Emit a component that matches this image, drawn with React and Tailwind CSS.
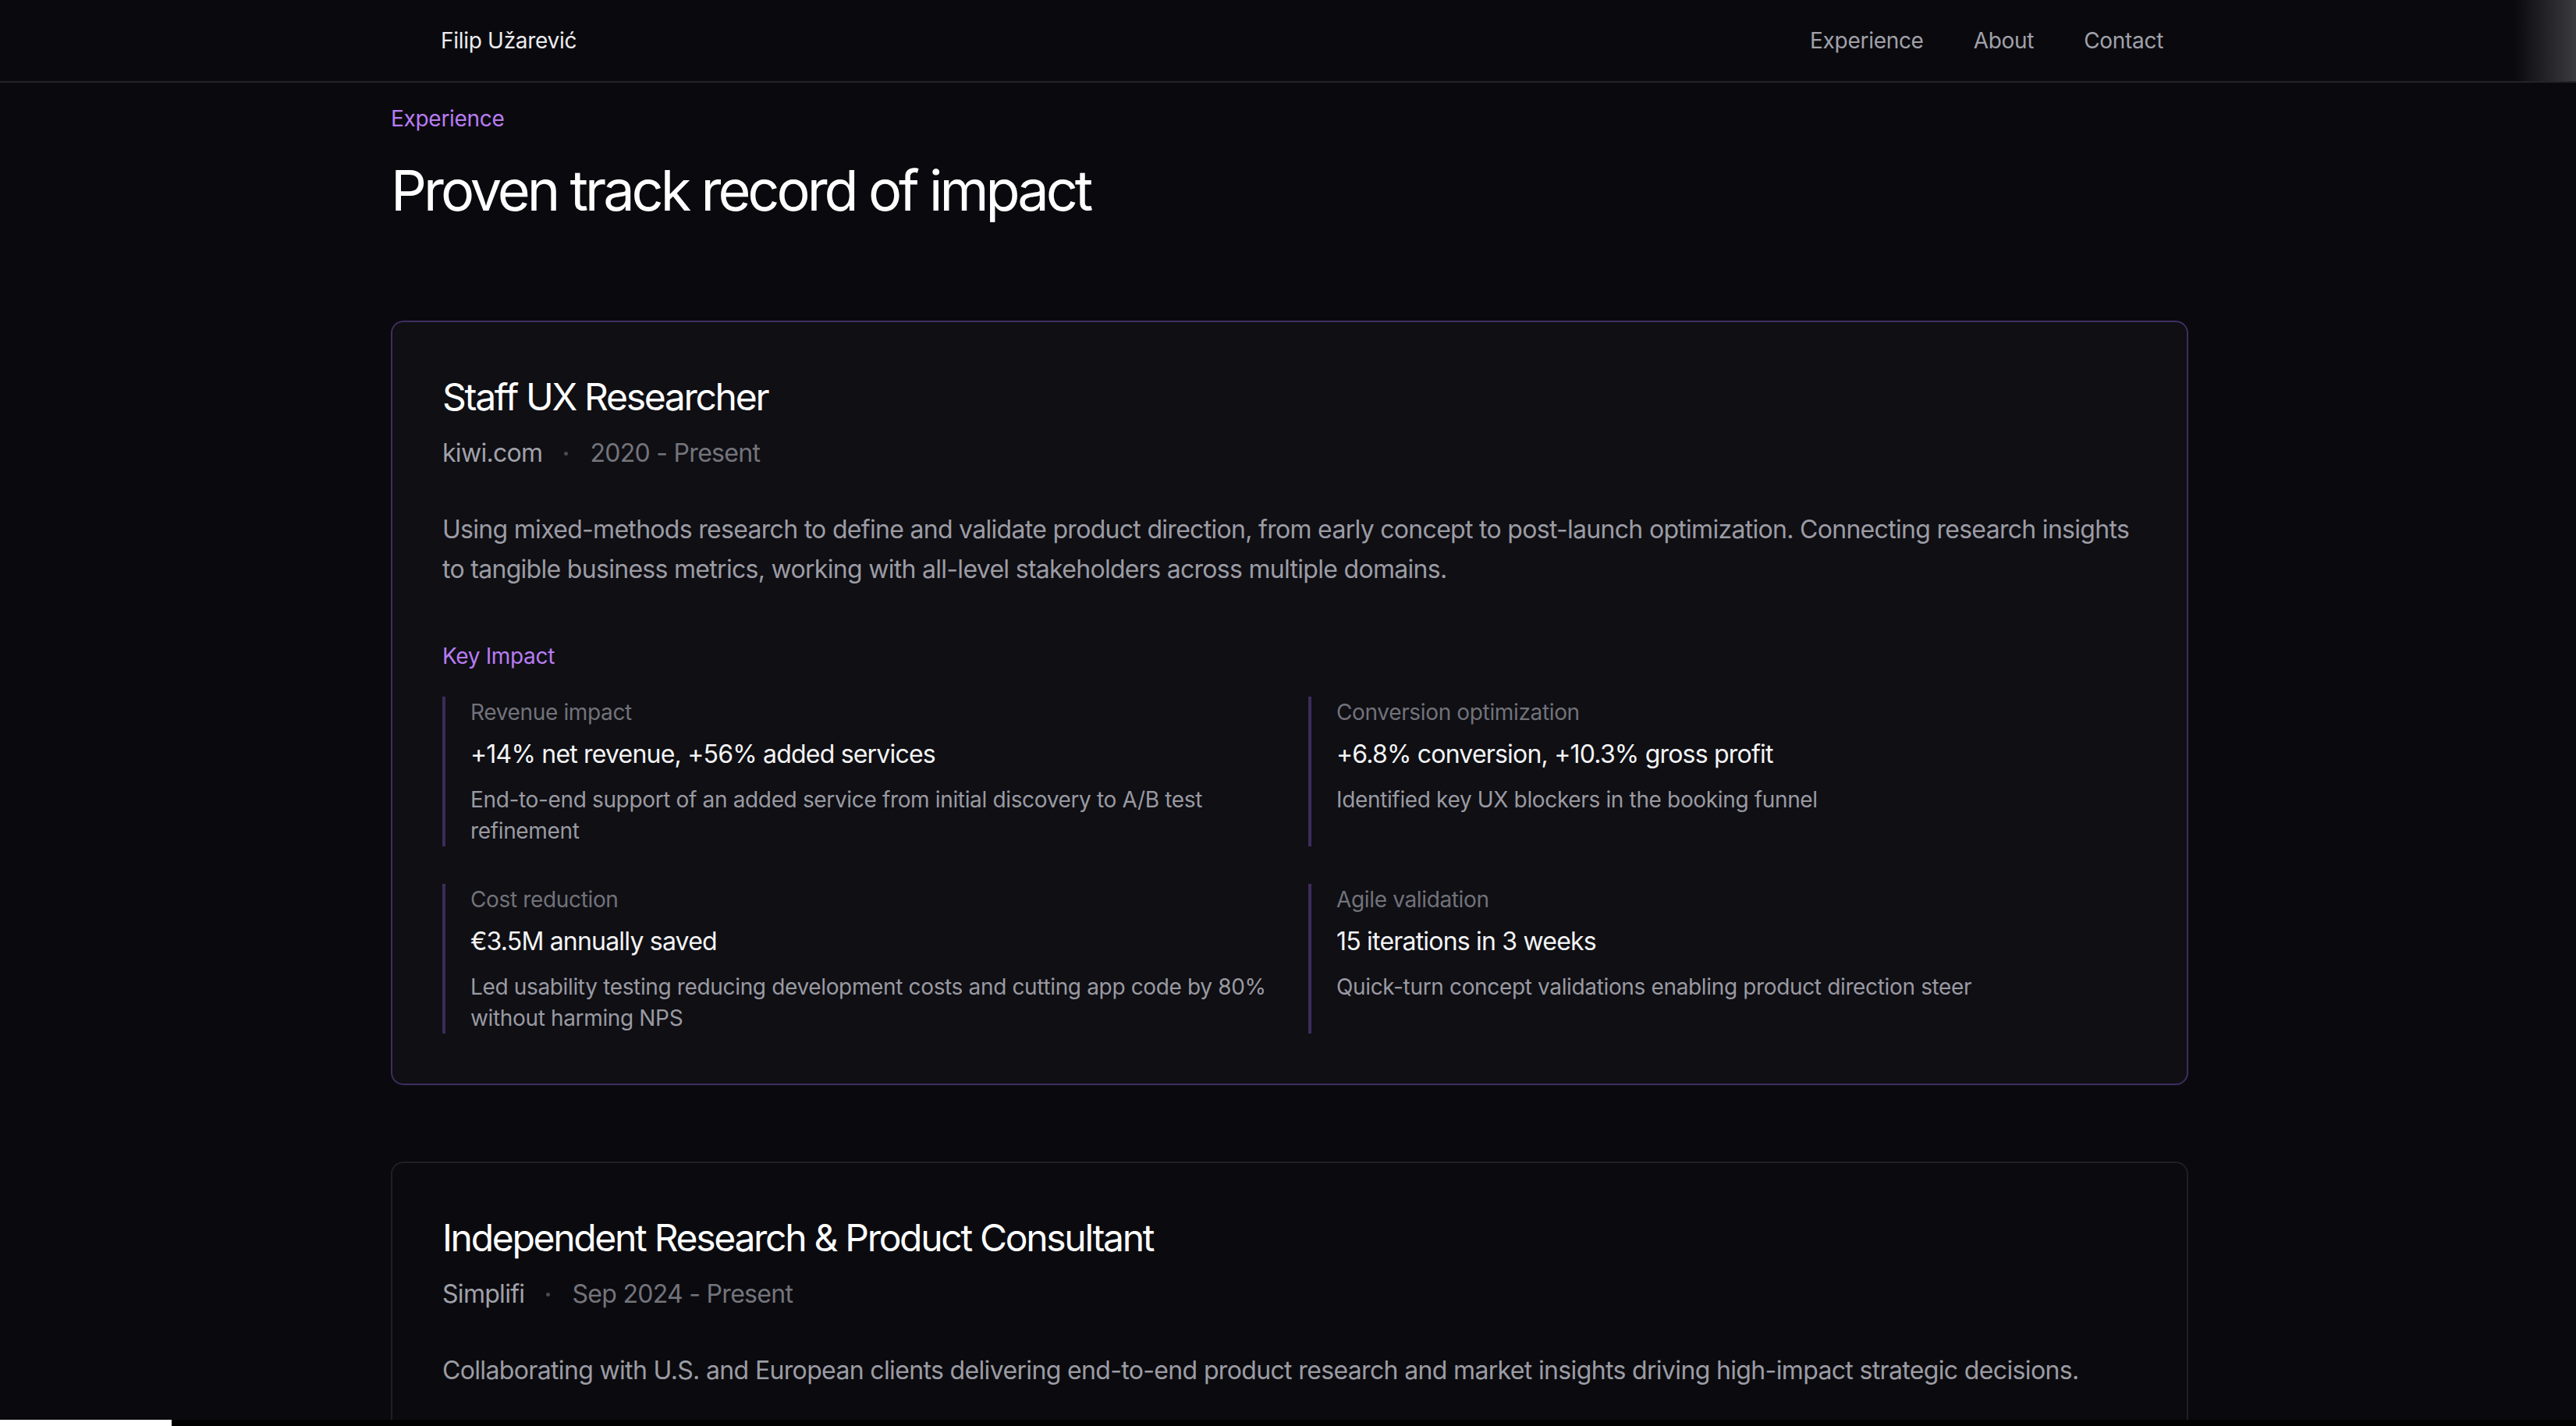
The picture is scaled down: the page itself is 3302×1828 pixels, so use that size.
const impacts = [
  {
    label: 'Revenue impact',
    value: '+14% net revenue, +56% added services',
    desc: 'End-to-end support of an added service from initial discovery to A/B test refinement',
  },
  {
    label: 'Conversion optimization',
    value: '+6.8% conversion, +10.3% gross profit',
    desc: 'Identified key UX blockers in the booking funnel',
  },
  {
    label: 'Cost reduction',
    value: '€3.5M annually saved',
    desc: 'Led usability testing reducing development costs and cutting app code by 80% without harming NPS',
  },
  {
    label: 'Agile validation',
    value: '15 iterations in 3 weeks',
    desc: 'Quick-turn concept validations enabling product direction steer',
  },
];

const Meta = ({ company, period }) => (
  <div className="mt-[16px] flex items-center gap-[28px] text-[32px] leading-[48px] tracking-[-0.7px]">
    <span className="text-[#a1a1aa]">{company}</span>
    <span className="w-[5px] h-[5px] rounded-full bg-[#4b4b53]"></span>
    <span className="text-[#74747c]">{period}</span>
  </div>
);

const App = () => {
  return (
    <div className="relative h-[1828px] overflow-hidden bg-[#0a0a0e] font-['Inter',sans-serif] antialiased">
      <header className="relative h-[106px] border-b-2 border-[#232328] pl-[4px]">
        <div className="max-w-[2304px] h-[104px] mx-auto pl-[64px] pr-[32px] flex items-center justify-between text-[28px] leading-[40px] tracking-[-0.3px]">
          <span className="text-[#ececef]">Filip Užarević</span>
          <nav className="flex items-center gap-[64px] text-[#a1a1aa]">
            <a>Experience</a>
            <a>About</a>
            <a>Contact</a>
          </nav>
        </div>
        <div className="absolute right-0 top-0 h-full w-[80px] bg-gradient-to-r from-transparent to-[#3a3a3f]"></div>
      </header>

      <div className="pl-[4px]">
        <main className="max-w-[2304px] mx-auto pt-[26px]">
          <p className="text-[28px] leading-[40px] tracking-[-0.3px] text-[#b87cf2]">Experience</p>
          <h2 className="mt-[32px] text-[72px] leading-[80px] text-white font-normal tracking-[-4px]">Proven track record of impact</h2>

          <div className="mt-[127px] bg-[#0f0f14] border-2 border-[#3f2d60] rounded-[16px] p-[64px]">
            <h3 className="text-[48px] leading-[64px] tracking-[-2.3px] text-white">Staff UX Researcher</h3>
            <Meta company="kiwi.com" period="2020 - Present" />
            <p className="mt-[48px] text-[32px] leading-[51px] tracking-[-0.7px] text-[#9c9ca4]">
              Using mixed-methods research to define and validate product direction, from early concept to post-launch optimization. Connecting research insights to tangible business metrics, working with all-level stakeholders across multiple domains.
            </p>

            <p className="mt-[66px] text-[28px] leading-[40px] tracking-[-0.35px] text-[#b87cf2]">Key Impact</p>
            <div className="mt-[32px] grid grid-cols-2 gap-[48px]">
              {impacts.map((item) => (
                <div key={item.label} className="border-l-4 border-[#3d2b5c] pl-[32px]">
                  <p className="text-[28px] leading-[40px] tracking-[-0.35px] text-[#72727a]">{item.label}</p>
                  <p className="mt-[10px] text-[32px] leading-[48px] tracking-[-0.8px] text-[#f4f4f5]">{item.value}</p>
                  <p className="mt-[14px] text-[28px] leading-[40px] tracking-[-0.35px] text-[#9a9aa2]">{item.desc}</p>
                </div>
              ))}
            </div>
          </div>

          <div className="mt-[98px] bg-[#0b0b0f] border-2 border-[#1f1f24] rounded-[16px] p-[64px]">
            <h3 className="text-[48px] leading-[64px] tracking-[-2.3px] text-white">Independent Research &amp; Product Consultant</h3>
            <Meta company="Simplifi" period="Sep 2024 - Present" />
            <p className="mt-[48px] text-[32px] leading-[51px] tracking-[-0.65px] text-[#9c9ca4]">
              Collaborating with U.S. and European clients delivering end-to-end product research and market insights driving high-impact strategic decisions.
            </p>
          </div>
        </main>
      </div>

      <div className="absolute left-0 right-0 bottom-0 h-[8px] bg-black">
        <div className="w-[220px] h-full bg-white"></div>
      </div>
    </div>
  );
};

export default App;
